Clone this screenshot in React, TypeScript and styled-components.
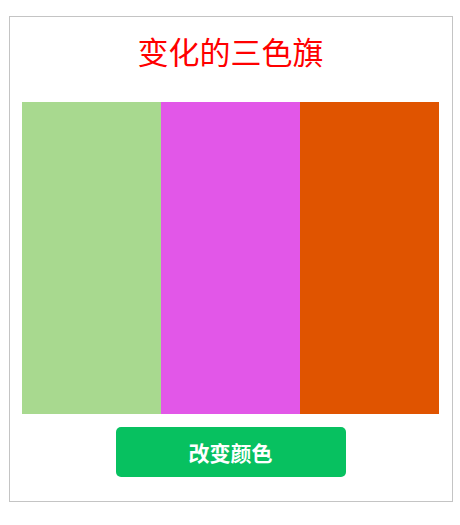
import React, {useState} from 'react';

import styled, {createGlobalStyle} from 'styled-components';

const GlobalStyle = createGlobalStyle`
  body {
    margin: 0;
    background-color: #ffffff;
    font-family: 'Liberation Sans', 'Noto Sans CJK SC', sans-serif;
  }
`;

const Card = styled.div`
  box-sizing: border-box;
  width: 444px;
  height: 486px;
  margin: 16px 0 0 9px;
  padding: 0 13px 0 12px;
  border: 1px solid #c4c4c4;
  display: flex;
  flex-direction: column;
  align-items: center;
`;

const Title = styled.h1`
  margin: 0;
  padding: 14px 0 31px;
  line-height: 40px;
  font-size: 31px;
  font-weight: 400;
  color: #ff0000;
  font-family: 'Noto Sans CJK SC', sans-serif;
`;

const Flag = styled.div`
  width: 417px;
  height: 312px;
  display: flex;
`;

const Stripe = styled.div<{$color: string}>`
  flex: 1;
  background-color: ${(p) => p.$color};
`;

const Button = styled.button`
  margin-top: 13px;
  width: 230px;
  height: 50px;
  border: none;
  border-radius: 5px;
  background-color: #07c160;
  color: #ffffff;
  font-size: 21px;
  font-weight: 700;
  font-family: 'Noto Sans CJK SC', sans-serif;
  cursor: pointer;
`;

const palettes = [
  ['#a8d98f', '#e257e8', '#e05400'],
  ['#e05400', '#a8d98f', '#e257e8'],
  ['#e257e8', '#e05400', '#a8d98f'],
];

export default function App() {
  const [index, setIndex] = useState(0);
  const colors = palettes[index];

  return (
    <>
      <GlobalStyle />
      <Card>
        <Title>变化的三色旗</Title>
        <Flag>
          {colors.map((c, i) => (
            <Stripe key={i} $color={c} />
          ))}
        </Flag>
        <Button onClick={() => setIndex((index + 1) % palettes.length)}>
          改变颜色
        </Button>
      </Card>
    </>
  );
}
